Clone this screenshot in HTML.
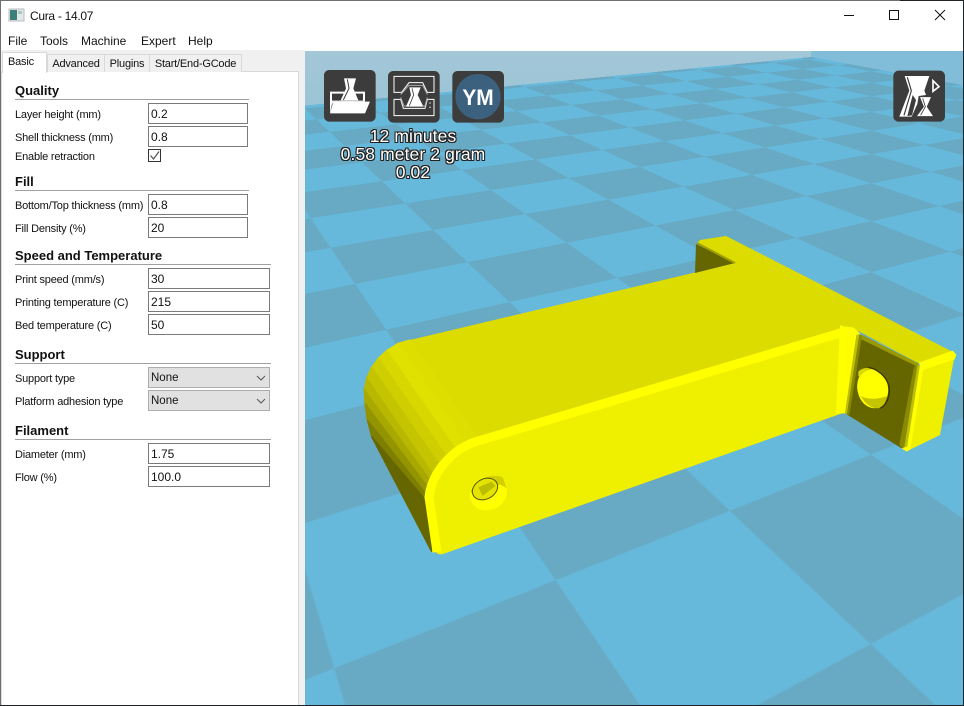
<!DOCTYPE html>
<html><head><meta charset="utf-8"><title>Cura - 14.07</title>
<style>
html,body{margin:0;padding:0;width:964px;height:706px;overflow:hidden;background:#fff}
body{position:relative;font-family:"Liberation Sans",Arial,sans-serif;color:#000}
.a{position:absolute;white-space:nowrap}
.m{font-size:12px;line-height:16px;top:33px;color:#111}
.l{left:15px;font-size:11px;letter-spacing:-.2px;line-height:14px;color:#111}
.h{left:15px;font-size:13px;font-weight:bold;line-height:16px;color:#111}
.r{position:absolute;left:15px;height:1px;background:#a0a0a0}
.i{position:absolute;left:148px;box-sizing:border-box;height:21px;border:1px solid #7a7a7a;background:#fff;font-size:12px;line-height:20px;padding-left:2px;color:#111}
.s{position:absolute;left:148px;width:122px;box-sizing:border-box;height:21px;border:1px solid #adadad;background:#e1e1e1;font-size:11.5px;line-height:21px;padding-left:2px;color:#111}
.t{position:absolute;box-sizing:border-box;top:54px;height:18px;background:#f0f0f0;border:1px solid #d9d9d9;border-bottom:none;font-size:11px;letter-spacing:-.2px;line-height:18px;text-align:center;color:#111}
.o{position:absolute;left:305px;width:216px;text-align:center;color:#fff;font-size:17.5px;line-height:18px;letter-spacing:.1px;
text-shadow:1px 0 0 #222,-1px 0 0 #222,0 1px 0 #222,0 -1px 0 #222,1px 1px 0 #222,-1px 1px 0 #222,1px -1px 0 #222,-1px -1px 0 #222}
#vp{position:absolute;left:305px;top:51px;width:658px;height:654px;overflow:hidden;background:linear-gradient(180deg,#a3c7d7 0,#9bc4d6 60px)}
#wall{position:absolute;left:506px;top:0;width:152px;height:60px;background:#81bdd9}
#fl{position:absolute;left:-305px;top:-51px;width:1532px;height:1425px;transform-origin:0 0;
background:conic-gradient(#68a9c4 0 25%,#66b9db 0 50%,#68a9c4 0 75%,#66b9db 0) 0 0/200px 200px;
transform:matrix3d(2.956,-0.103,0,0.00134,0.2705,-0.1694,0,0.00236,0,0,1,0,-311,722.78,0,0.26)}
</style></head><body>

<div class="a" style="left:0;top:50px;width:305px;height:656px;background:#f0f0f0"></div>
<div class="a" style="left:1px;top:71px;width:298px;height:635px;box-sizing:border-box;background:#fff;border:1px solid #d9d9d9"></div>

<svg class="a" style="left:8px;top:8px" width="18" height="15" viewBox="0 0 18 15"><rect x="1" y="1" width="15" height="12" fill="#e4e8e8" stroke="#b8bcbc"/><rect x="2" y="2" width="7" height="10" fill="#3c7f78"/><rect x="10" y="3" width="4" height="3" fill="#aac6c6"/></svg>
<div class="a" style="left:30px;top:8px;font-size:12px;letter-spacing:-.3px;line-height:16px;color:#111">Cura - 14.07</div>
<div class="a m" style="left:8px">File</div>
<div class="a m" style="left:40px">Tools</div>
<div class="a m" style="left:81px">Machine</div>
<div class="a m" style="left:141px">Expert</div>
<div class="a m" style="left:188px">Help</div>

<svg class="a" style="left:820px;top:0" width="144" height="30" viewBox="0 0 144 30" fill="none" stroke="#111"><path d="M24 15.5H34"/><rect x="69.5" y="10.5" width="9" height="9"/><path d="M115 10L125 20M125 10L115 20"/></svg>

<div class="t" style="left:47px;width:58px">Advanced</div>
<div class="t" style="left:104px;width:46px">Plugins</div>
<div class="t" style="left:149px;width:93px">Start/End-GCode</div>
<div class="a" style="left:2px;top:52px;width:45px;height:21px;box-sizing:border-box;background:#fff;border:1px solid #d9d9d9;border-bottom:none;font-size:11px;letter-spacing:-.2px;line-height:19px;padding-left:5px;color:#111">Basic</div>

<div class="a h" style="top:83px">Quality</div><div class="r" style="top:99px;width:234px"></div>
<div class="a l" style="top:108px">Layer height (mm)</div><div class="i" style="top:103px;width:100px">0.2</div>
<div class="a l" style="top:131px">Shell thickness (mm)</div><div class="i" style="top:126px;width:100px">0.8</div>
<div class="a l" style="top:150px">Enable retraction</div>
<svg class="a" style="left:148px;top:149px" width="14" height="14" viewBox="0 0 14 14"><rect x=".5" y=".5" width="12" height="12" fill="#fff" stroke="#333"/><path d="M2.5 6.5L5.5 10L11 2.5" fill="none" stroke="#555" stroke-width="1.2"/></svg>

<div class="a h" style="top:174px">Fill</div><div class="r" style="top:190px;width:234px"></div>
<div class="a l" style="top:199px">Bottom/Top thickness (mm)</div><div class="i" style="top:194px;width:100px">0.8</div>
<div class="a l" style="top:222px">Fill Density (%)</div><div class="i" style="top:217px;width:100px">20</div>

<div class="a h" style="top:248px">Speed and Temperature</div><div class="r" style="top:264px;width:256px"></div>
<div class="a l" style="top:273px">Print speed (mm/s)</div><div class="i" style="top:268px;width:122px">30</div>
<div class="a l" style="top:296px">Printing temperature (C)</div><div class="i" style="top:291px;width:122px">215</div>
<div class="a l" style="top:319px">Bed temperature (C)</div><div class="i" style="top:314px;width:122px">50</div>

<div class="a h" style="top:347px">Support</div><div class="r" style="top:363px;width:256px"></div>
<div class="a l" style="top:372px">Support type</div><div class="s" style="top:367px">None</div>
<div class="a l" style="top:395px">Platform adhesion type</div><div class="s" style="top:390px">None</div>
<svg class="a" style="left:250px;top:370px" width="20" height="40" viewBox="0 0 20 40" fill="none" stroke="#555"><path d="M7 6L11 10L15 6M7 29L11 33L15 29"/></svg>

<div class="a h" style="top:423px">Filament</div><div class="r" style="top:439px;width:256px"></div>
<div class="a l" style="top:448px">Diameter (mm)</div><div class="i" style="top:443px;width:122px">1.75</div>
<div class="a l" style="top:471px">Flow (%)</div><div class="i" style="top:466px;width:122px">100.0</div>

<div id="vp"><div id="wall"></div><div id="fl"></div></div>

<svg class="a" style="left:0;top:0" width="964" height="706" viewBox="0 0 964 706">
<polygon points="410,340 735,263 697,243 700,240 726,236 955,353 918,363 860,332 847,327 477,437" fill="#dcdc00"/>
<polygon points="696,244 695,273 735,263" fill="#666600"/>
<path d="M697 243L735 263" stroke="#a0a000" stroke-width="2" fill="none"/>
<g transform="translate(350 230) scale(.33333)" stroke-width="4">
<polygon points="180,330 145,340 345,635 380,620" fill="#dede00" stroke="#dede00"/>
<polygon points="145,340 110,362 315,655 345,635" fill="#e1e100" stroke="#e1e100"/>
<polygon points="110,362 85,385 290,680 315,655" fill="#d8d800" stroke="#d8d800"/>
<polygon points="85,385 65,412 268,705 290,680" fill="#cece00" stroke="#cece00"/>
<polygon points="65,412 50,445 250,735 268,705" fill="#c4c400" stroke="#c4c400"/>
<polygon points="50,445 43,480 240,750 250,735" fill="#b8b800" stroke="#b8b800"/>
<polygon points="43,480 45,520 232,770 240,750" fill="#a8a800" stroke="#a8a800"/>
<polygon points="45,520 52,570 226,790 232,770" fill="#949400" stroke="#949400"/>
<polygon points="52,570 65,620 222,805 226,790" fill="#7e7e00" stroke="#7e7e00"/>
<polygon points="65,620 245,965 240,900 222,805" fill="#666600" stroke="#666600"/>
</g>
<g transform="translate(840 320) scale(.33333)">
<polygon points="62,45 235,130 185,385 15,280" fill="#666600"/>
<path d="M64 44L235 130L232 140L60 56Z" fill="#999900"/>
</g>
<path d="M847 327L477 437C450 445 428 470 425 497L434 548Q436 556 443 554L843 413Z" fill="#efef00"/>
<path d="M847 331L478 441C453 448 432 472 429 497L437 552" fill="none" stroke="#ffff00" stroke-width="9"/>
<g transform="translate(350 230) scale(.33333)">
<ellipse cx="415" cy="790" rx="57" ry="50" transform="rotate(-25 415 790)" fill="#ffff00"/>
<path d="M362 785C378 745 425 728 458 742L470 775C440 750 400 765 385 805Z" fill="#d0d000"/>
<ellipse cx="405" cy="777" rx="40" ry="30" transform="rotate(-28 405 777)" fill="#e4e400" stroke="#555500" stroke-width="3"/>
<path d="M385 772L425 755L436 768L398 798Z" fill="#bcbc00"/>
</g>
<g transform="translate(840 320) scale(.33333)">
<polygon points="0,15 50,40 15,280 -12,280" fill="#ffff00"/>
<polygon points="50,40 58,43 21,283 15,280" fill="#c0c000"/>
<polygon points="58,43 66,48 28,286 21,283" fill="#8a8a00"/>
<polygon points="0,18 40,22 62,42 40,46 5,30" fill="#ffff00"/>
<polygon points="250,135 345,100 300,345 212,388" fill="#efef00"/>
<polygon points="222,140 232,137 192,388 178,375" fill="#8a8a00"/>
<polygon points="232,137 240,135 200,390 192,388" fill="#c0c000"/>
<polygon points="240,135 252,135 212,388 200,390" fill="#ffff00"/>
<polygon points="236,128 338,92 349,104 344,118 248,150" fill="#ffff00"/>
<polygon points="185,385 200,395 212,388 200,380" fill="#ffff00"/>
<ellipse cx="98" cy="205" rx="46" ry="60" transform="rotate(-10 98 205)" fill="#ffff00"/>
<path d="M62 228C85 240 115 238 142 228L132 258C110 272 85 265 62 228Z" fill="#c4c400"/>
<path d="M85 142C125 150 150 185 148 215C146 240 135 258 120 265" fill="none" stroke="#333300" stroke-width="4"/>
<path d="M55 155C65 145 80 140 95 148C75 150 65 165 55 170Z" fill="#d8d800"/>
</g>
</svg>

<svg class="a" style="left:310px;top:60px" width="210" height="125" viewBox="0 0 630 375">
<rect x="42" y="30" width="155" height="155" rx="16" fill="#3c3c3c"/>
<polygon points="60,95 165,95 165,125 70,125 65,135 60,160" fill="#fff"/>
<polygon points="66,101 159,101 159,122 66,122" fill="#3c3c3c"/>
<polygon points="70,125 180,125 165,160 60,160" fill="#fff"/>
<polygon points="102,55 138,55 130,85 145,121 92,121 108,85" fill="#fff"/>
<path d="M112 58L117 85L100 120" fill="none" stroke="#3c3c3c" stroke-width="3"/>

<rect x="234" y="33" width="155" height="155" rx="16" fill="#3c3c3c"/>
<path d="M252 97V49H372V97H352L338 68H297L275 97Z" fill="none" stroke="#fff" stroke-width="3"/>
<path d="M252 118V167H372V118H352L345 145H280L272 118Z" fill="none" stroke="#fff" stroke-width="3"/>
<path d="M272 104L297 76H338L352 104M272 112L282 138H345L352 112" fill="none" stroke="#aaa" stroke-width="3"/>
<polygon points="298,82 332,82 323,105 340,140 288,140 303,105" fill="#fff"/>
<path d="M306 85L311 105L298 137" fill="none" stroke="#3c3c3c" stroke-width="2.5"/>
<rect x="358" y="127" width="4" height="4" fill="#ddd"/><rect x="358" y="140" width="4" height="4" fill="#ddd"/>

<rect x="427" y="33" width="155" height="155" rx="16" fill="#3c3c3c"/>
<circle cx="504" cy="110" r="68" fill="#3b617f"/>
<text x="504" y="135" text-anchor="middle" font-family="Liberation Sans,Arial,sans-serif" font-weight="bold" font-size="66" fill="#fff" textLength="94" lengthAdjust="spacingAndGlyphs">YM</text>
</svg>

<svg class="a" style="left:820px;top:60px" width="144" height="70" viewBox="0 180 432 210">
<rect x="220" y="212" width="155" height="153" rx="16" fill="#3c3c3c"/>
<polygon points="254,228 328,228 313,272 318,285 296,288 292,312 275,350 238,350 268,272" fill="#fff"/>
<path d="M262 232L274 272L252 346" fill="none" stroke="#3c3c3c" stroke-width="3.5"/>
<polygon points="262,348 276,346 288,300 278,285" fill="#3c3c3c"/>
<polygon points="298,290 335,290 322,320 342,350 288,350 310,320" fill="#fff" stroke="#3c3c3c" stroke-width="3"/>
<path d="M308 295L316 320L302 346" fill="none" stroke="#3c3c3c" stroke-width="2.5"/>
<path d="M339 242L357 260L339 274Z" fill="none" stroke="#fff" stroke-width="5"/>
</svg>

<div class="o" style="top:127px">12 minutes</div>
<div class="o" style="top:145px">0.58 meter 2 gram</div>
<div class="o" style="top:163px">0.02</div>

<div class="a" style="left:0;top:0;width:900px;height:1px;background:#6f6f6f"></div>
<div class="a" style="left:900px;top:0;width:64px;height:1px;background:#222"></div>
<div class="a" style="left:0;top:0;width:1px;height:706px;background:#6f6f6f"></div>
<div class="a" style="left:963px;top:0;width:1px;height:706px;background:#1c2328"></div>
<div class="a" style="left:0;top:705px;width:964px;height:1px;background:#1c2328"></div>
</body></html>
